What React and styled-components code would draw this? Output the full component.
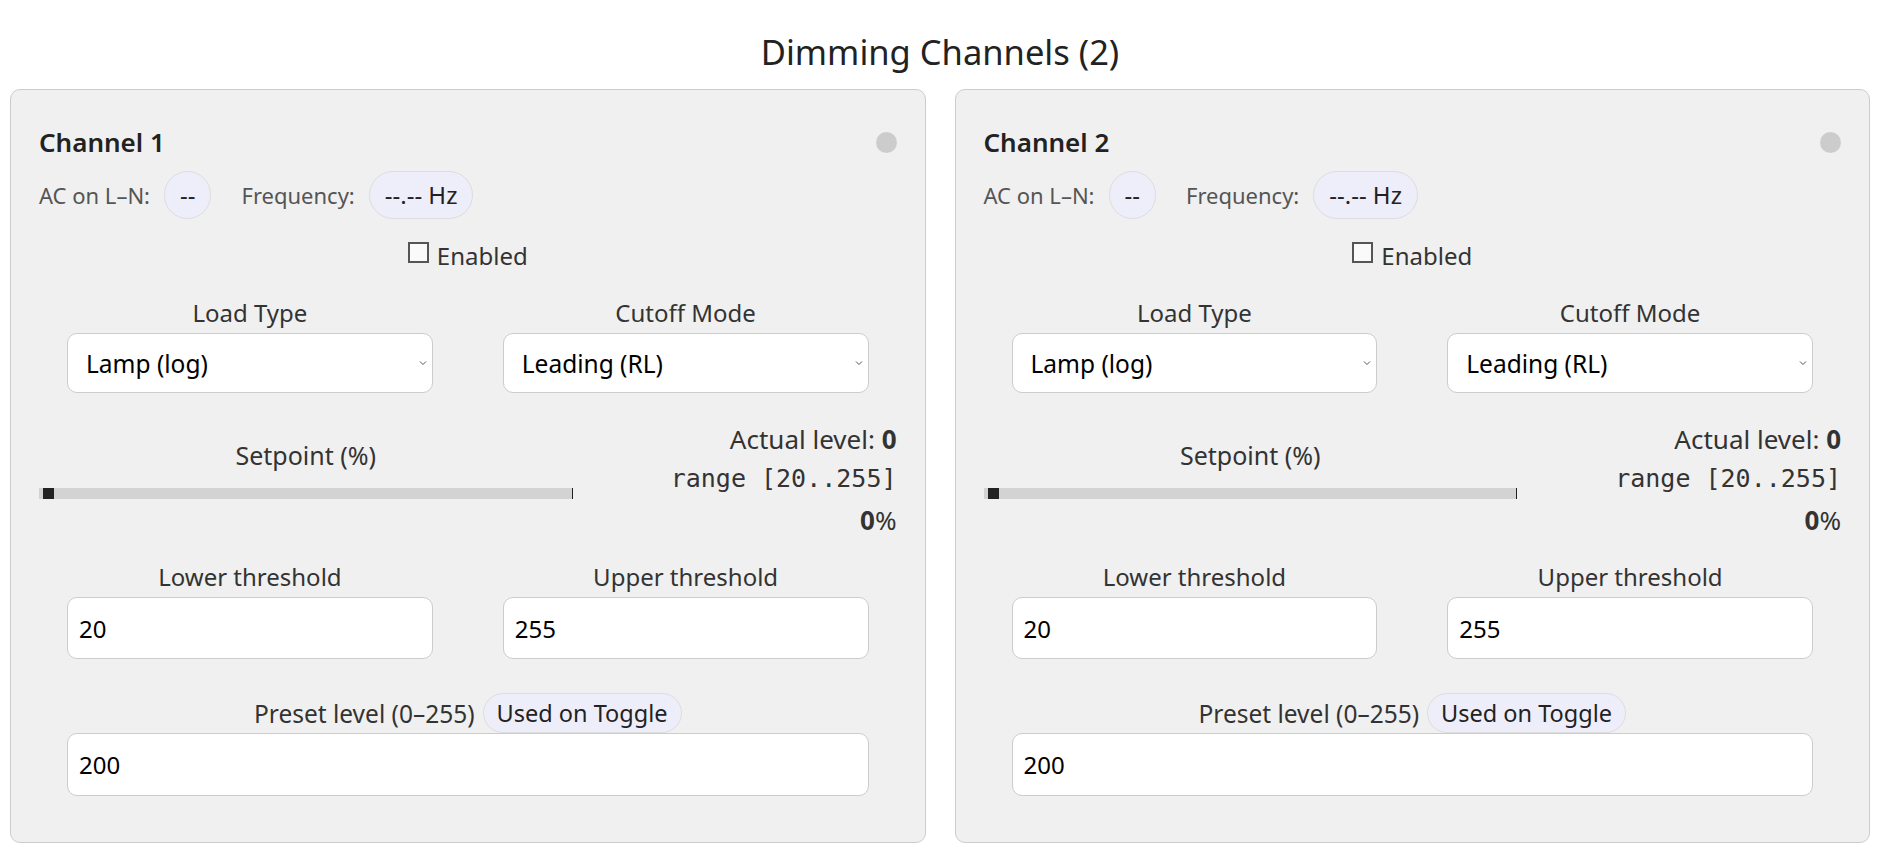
import React from "react";
import styled, { createGlobalStyle } from "styled-components";

const GlobalStyle = createGlobalStyle`
  * { box-sizing: border-box; }
  body {
    margin: 0;
    background: #fff;
    color: #333;
    font-family: "Segoe UI", "Noto Sans", sans-serif;
  }
`;

const Page = styled.div`
  padding: 0 13px 0 10px;
`;

const Title = styled.h2`
  margin: 31px 0 17px;
  text-align: center;
  font-size: 34.5px;
  font-weight: 400;
  line-height: 1.2;
  color: #222;
`;

const CardGrid = styled.div`
  display: grid;
  grid-template-columns: 1fr 1fr;
  gap: 29px;
`;

const Card = styled.section`
  background: #f0f0f0;
  border: 1px solid #ccc;
  border-radius: 10px;
  padding: 33px 28px 46px;
`;

const CardHeader = styled.div`
  display: flex;
  justify-content: space-between;
  align-items: center;
`;

const ChannelName = styled.h3`
  margin: 0;
  font-size: 26px;
  font-weight: 600;
  line-height: 39px;
  color: #222;
`;

const StatusDot = styled.span`
  width: 21px;
  height: 21px;
  border-radius: 50%;
  background: ${(p) => (p.$on ? "#3c3" : "#ccc")};
`;

const StatusRow = styled.div`
  display: flex;
  align-items: center;
  margin-top: 9px;
`;

const StatGroup = styled.div`
  display: flex;
  align-items: center;
  gap: 14px;
  margin-right: 30px;
`;

const StatLabel = styled.span`
  font-size: 22px;
  color: #555;
`;

const Pill = styled.span`
  display: inline-block;
  font-size: ${(p) => p.$size || 24}px;
  line-height: ${(p) => p.$line || 34}px;
  padding: ${(p) => p.$pad || "6px 15px"};
  border: 1px solid #ddd;
  border-radius: 999px;
  background: #eeeefb;
  color: #222;
`;

const EnableRow = styled.label`
  display: flex;
  justify-content: center;
  align-items: center;
  margin-top: 19px;
  font-size: 24px;
  line-height: 35px;
`;

const Check = styled.input`
  appearance: none;
  -webkit-appearance: none;
  width: 21px;
  height: 21px;
  margin: 0 8px 0 0;
  border: 2px solid #555;
  background: #fafafa;
  position: relative;
  top: -3px;
`;

const FieldGrid = styled.div`
  display: grid;
  grid-template-columns: 1fr 1fr;
  column-gap: 70px;
  padding: 0 28px;
  margin-top: ${(p) => p.$top}px;
`;

const Field = styled.div`
  display: flex;
  flex-direction: column;
`;

const FieldLabel = styled.label`
  text-align: center;
  font-size: 24px;
  line-height: 35px;
  margin-bottom: 3px;
`;

const SelectWrap = styled.div`
  position: relative;
`;

const Select = styled.select`
  appearance: none;
  -webkit-appearance: none;
  width: 100%;
  height: 60px;
  padding: 0 18px;
  border: 1px solid #ccc;
  border-radius: 10px;
  background: #fff;
  color: #000;
  font-family: inherit;
  font-size: 24.5px;
`;

const Chevron = styled.svg`
  position: absolute;
  right: 6px;
  top: 50%;
  transform: translateY(-50%);
  pointer-events: none;
`;

const NumInput = styled.input`
  width: 100%;
  height: ${(p) => p.$h || 62}px;
  padding: 0 11px;
  border: 1px solid #ccc;
  border-radius: 10px;
  background: #fff;
  color: #000;
  font-family: inherit;
  font-size: 24px;
`;

const LevelRow = styled.div`
  display: grid;
  grid-template-columns: 1fr 324px;
  margin-top: 27px;
`;

const SliderCol = styled.div`
  display: flex;
  flex-direction: column;
  padding-top: 17px;
`;

const SliderLabel = styled.span`
  text-align: center;
  font-size: 25px;
  line-height: 36px;
`;

const Range = styled.input`
  -webkit-appearance: none;
  appearance: none;
  width: 100%;
  height: 11px;
  margin: 15px 0 0;
  padding-left: 4px;
  background: #d3d3d3;
  border-right: 1px solid #222;
  outline: none;

  &::-webkit-slider-thumb {
    -webkit-appearance: none;
    width: 11px;
    height: 11px;
    background: #222;
    border: none;
  }
`;

const ReadoutCol = styled.div`
  text-align: right;
  font-size: 26px;
`;

const ReadLine = styled.div`
  line-height: 38px;
  margin-top: ${(p) => p.$top || 0}px;
`;

const Mono = styled.code`
  font-family: "DejaVu Sans Mono", "Liberation Mono", monospace;
  font-size: 25px;
`;

const PresetBlock = styled.div`
  padding: 0 28px;
  margin-top: 34px;
`;

const PresetHead = styled.div`
  display: flex;
  justify-content: center;
  align-items: center;
  gap: 8px;
  font-size: 24.5px;
`;

const channels = [
  { id: 1, load: "Lamp (log)", cutoff: "Leading (RL)", lower: 20, upper: 255, preset: 200 },
  { id: 2, load: "Lamp (log)", cutoff: "Leading (RL)", lower: 20, upper: 255, preset: 200 },
];

const Dropdown = ({ value, options }) => (
  <SelectWrap>
    <Select defaultValue={value}>
      {options.map((o) => (
        <option key={o}>{o}</option>
      ))}
    </Select>
    <Chevron width="8" height="5" viewBox="0 0 8 5">
      <path d="M1 1l3 3 3-3" fill="none" stroke="#555" strokeWidth="1" />
    </Chevron>
  </SelectWrap>
);

const ChannelCard = ({ ch }) => (
  <Card>
    <CardHeader>
      <ChannelName>Channel {ch.id}</ChannelName>
      <StatusDot />
    </CardHeader>

    <StatusRow>
      <StatGroup>
        <StatLabel>AC on L–N:</StatLabel>
        <Pill>--</Pill>
      </StatGroup>
      <StatGroup>
        <StatLabel>Frequency:</StatLabel>
        <Pill>--.-- Hz</Pill>
      </StatGroup>
    </StatusRow>

    <EnableRow>
      <Check type="checkbox" />
      Enabled
    </EnableRow>

    <FieldGrid $top={22}>
      <Field>
        <FieldLabel>Load Type</FieldLabel>
        <Dropdown value={ch.load} options={["Lamp (log)", "Linear", "Motor"]} />
      </Field>
      <Field>
        <FieldLabel>Cutoff Mode</FieldLabel>
        <Dropdown value={ch.cutoff} options={["Leading (RL)", "Trailing (RC)"]} />
      </Field>
    </FieldGrid>

    <LevelRow>
      <SliderCol>
        <SliderLabel>Setpoint (%)</SliderLabel>
        <Range type="range" min="0" max="100" defaultValue="0" />
      </SliderCol>
      <ReadoutCol>
        <ReadLine>
          Actual level: <b>0</b>
        </ReadLine>
        <ReadLine>
          <Mono>range [{ch.lower}..{ch.upper}]</Mono>
        </ReadLine>
        <ReadLine $top={3}>
          <b>0</b>%
        </ReadLine>
      </ReadoutCol>
    </LevelRow>

    <FieldGrid $top={20}>
      <Field>
        <FieldLabel>Lower threshold</FieldLabel>
        <NumInput type="text" defaultValue={ch.lower} />
      </Field>
      <Field>
        <FieldLabel>Upper threshold</FieldLabel>
        <NumInput type="text" defaultValue={ch.upper} />
      </Field>
    </FieldGrid>

    <PresetBlock>
      <PresetHead>
        <span>Preset level (0–255)</span>
        <Pill $size={23.5} $line={36} $pad="1px 13px">
          Used on Toggle
        </Pill>
      </PresetHead>
      <NumInput type="text" $h={63} defaultValue={ch.preset} />
    </PresetBlock>
  </Card>
);

export default function App() {
  return (
    <Page>
      <GlobalStyle />
      <Title>Dimming Channels ({channels.length})</Title>
      <CardGrid>
        {channels.map((ch) => (
          <ChannelCard key={ch.id} ch={ch} />
        ))}
      </CardGrid>
    </Page>
  );
}
